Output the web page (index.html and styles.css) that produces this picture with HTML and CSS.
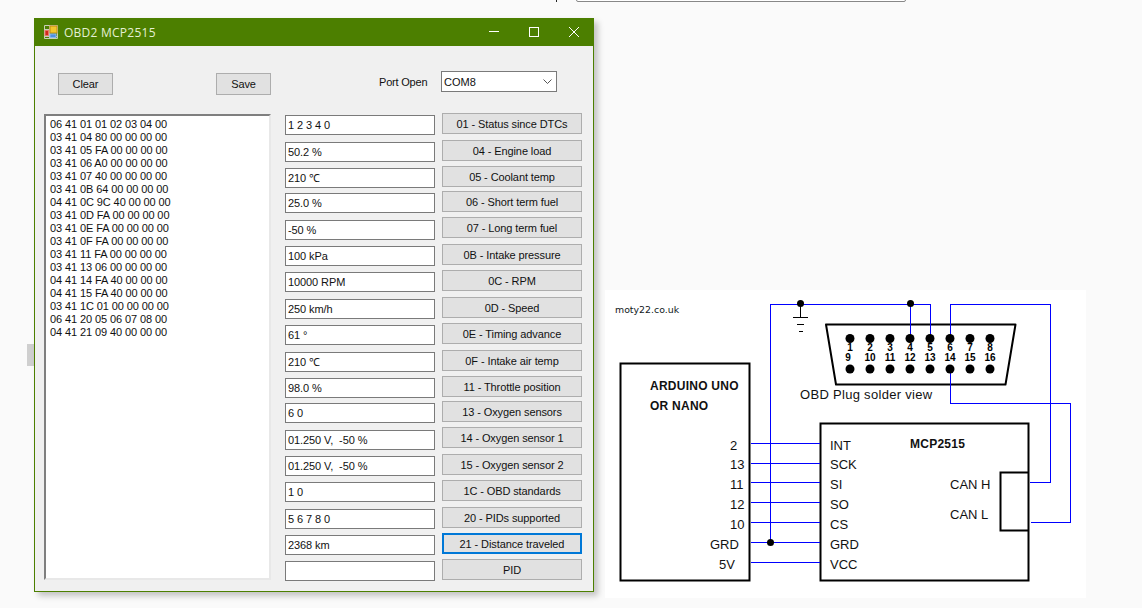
FILE: index.html
```html
<!DOCTYPE html>
<html lang="en">
<head>
  <meta charset="UTF-8">
  <title>OBD2 MCP2515</title>
  <link rel="stylesheet" href="styles.css">
</head>
<body>
  <div class="browser-select"></div>
  <div class="browser-tick"></div>
  <div class="side-handle"></div>

  <div class="desktop">
    <section class="window">
      <header class="titlebar">
        <svg class="app-icon" width="16" height="16" viewBox="0 0 16 16">
          <path d="M1.5 1.5H14.5V14.5H1.5ZM1.5 5.5H6.5M6.5 1.5V14.5M1.5 12.5H14.5" fill="none" stroke="#c9cdb8"/>
          <rect x="7" y="2" width="7" height="7" fill="#f3c72c" stroke="#c08a10"/>
          <rect x="2" y="6.5" width="3.5" height="5" fill="#d0281c" stroke="#e87868"/>
          <rect x="7" y="10" width="6" height="3.5" fill="#4f8fe0" stroke="#8ab8ec"/>
        </svg>
        <span class="title">OBD2 MCP2515</span>
        <div class="controls">
          <svg width="10" height="10" viewBox="0 0 10 10"><path d="M0 4.5H10" stroke="#fff"/></svg>
          <svg width="10" height="10" viewBox="0 0 10 10"><rect x="0.5" y="0.5" width="9" height="9" fill="none" stroke="#fff"/></svg>
          <svg width="10" height="10" viewBox="0 0 10 10"><path d="M0 0L10 10M10 0L0 10" stroke="#fff"/></svg>
        </div>
      </header>

      <div class="toolbar">
        <button class="btn tool-btn">Clear</button>
        <button class="btn tool-btn save-btn">Save</button>
        <label class="port-label">Port Open</label>
        <div class="combo">
          <span>COM8</span>
          <svg width="9" height="5" viewBox="0 0 9 5"><path d="M0.5 0.5L4.5 4.5L8.5 0.5" fill="none" stroke="#555"/></svg>
        </div>
      </div>

      <div class="content">
        <div class="log">06 41 01 01 02 03 04 00
03 41 04 80 00 00 00 00
03 41 05 FA 00 00 00 00
03 41 06 A0 00 00 00 00
03 41 07 40 00 00 00 00
03 41 0B 64 00 00 00 00
04 41 0C 9C 40 00 00 00
03 41 0D FA 00 00 00 00
03 41 0E FA 00 00 00 00
03 41 0F FA 00 00 00 00
03 41 11 FA 00 00 00 00
03 41 13 06 00 00 00 00
04 41 14 FA 40 00 00 00
04 41 15 FA 40 00 00 00
03 41 1C 01 00 00 00 00
06 41 20 05 06 07 08 00
04 41 21 09 40 00 00 00</div>

        <div class="rows">
          <div class="row"><div class="field">1 2 3 4 0</div><button class="btn pid">01 - Status since DTCs</button></div>
          <div class="row wide"><div class="field">50.2 %</div><button class="btn pid">04 - Engine load</button></div>
          <div class="row"><div class="field">210 ℃</div><button class="btn pid">05 - Coolant temp</button></div>
          <div class="row tight"><div class="field">25.0 %</div><button class="btn pid">06 - Short term fuel</button></div>
          <div class="row wide low"><div class="field">-50 %</div><button class="btn pid">07 - Long term fuel</button></div>
          <div class="row"><div class="field">100 kPa</div><button class="btn pid">0B - Intake pressure</button></div>
          <div class="row"><div class="field">10000 RPM</div><button class="btn pid">0C - RPM</button></div>
          <div class="row wide"><div class="field">250 km/h</div><button class="btn pid">0D - Speed</button></div>
          <div class="row"><div class="field">61 °</div><button class="btn pid">0E - Timing advance</button></div>
          <div class="row wide"><div class="field">210 ℃</div><button class="btn pid">0F - Intake air temp</button></div>
          <div class="row"><div class="field">98.0 %</div><button class="btn pid">11 - Throttle position</button></div>
          <div class="row tight"><div class="field">6 0</div><button class="btn pid">13 - Oxygen sensors</button></div>
          <div class="row wide low"><div class="field">01.250 V,&nbsp; -50 %</div><button class="btn pid">14 - Oxygen sensor 1</button></div>
          <div class="row"><div class="field">01.250 V,&nbsp; -50 %</div><button class="btn pid">15 - Oxygen sensor 2</button></div>
          <div class="row"><div class="field">1 0</div><button class="btn pid">1C - OBD standards</button></div>
          <div class="row wide"><div class="field">5 6 7 8 0</div><button class="btn pid">20 - PIDs supported</button></div>
          <div class="row"><div class="field">2368 km</div><button class="btn pid focused">21 - Distance traveled</button></div>
          <div class="row"><div class="field"></div><button class="btn pid">PID</button></div>
        </div>
      </div>
    </section>

    <figure class="diagram">
      <svg width="481" height="308" viewBox="605 290 481 308">
        <text class="credit" x="615" y="313">moty22.co.uk</text>

        <g class="box">
          <rect x="620.5" y="363.5" width="129" height="217"/>
          <rect x="820.5" y="423.5" width="208" height="157"/>
          <path d="M1029 472.5H1000.5V530.5H1029"/>
          <path d="M826 324.5H1015.5L1005.5 384.5H836Z" stroke-linejoin="round"/>
          <path class="thin" d="M800.5 304V318M793 317.5H808M797 324.5H804M799 331.5H803"/>
        </g>

        <g class="wire">
          <path d="M770.5 542V304.5H930.5V338"/>
          <path d="M910.5 304V338"/>
          <path d="M950.5 338V304.5H1050.5V482.5H1030"/>
          <path d="M950.5 369V403.5H1070.5V522.5H1031"/>
          <path d="M751 443.5H820M751 463.5H820M751 482.5H820M751 502.5H820M751 522.5H820M751 542.5H820M751 562.5H820"/>
        </g>

        <g class="pin-no">
          <text x="850" y="351">1</text><text x="870" y="351">2</text><text x="890" y="351">3</text><text x="910" y="351">4</text>
          <text x="930" y="351">5</text><text x="950" y="351">6</text><text x="970" y="351">7</text><text x="990" y="351">8</text>
          <text x="848" y="361">9</text><text x="870" y="361">10</text><text x="890" y="361">11</text><text x="910" y="361">12</text>
          <text x="930" y="361">13</text><text x="950" y="361">14</text><text x="970" y="361">15</text><text x="990" y="361">16</text>
        </g>

        <g class="dots">
          <circle cx="850" cy="338.5" r="4.5"/><circle cx="870" cy="338.5" r="4.5"/><circle cx="890" cy="338.5" r="4.5"/><circle cx="910" cy="338.5" r="4.5"/>
          <circle cx="930" cy="338.5" r="4.5"/><circle cx="950" cy="338.5" r="4.5"/><circle cx="970" cy="338.5" r="4.5"/><circle cx="990" cy="338.5" r="4.5"/>
          <circle cx="850" cy="369" r="4.5"/><circle cx="870" cy="369" r="4.5"/><circle cx="890" cy="369" r="4.5"/><circle cx="910" cy="369" r="4.5"/>
          <circle cx="930" cy="369" r="4.5"/><circle cx="950" cy="369" r="4.5"/><circle cx="970" cy="369" r="4.5"/><circle cx="990" cy="369" r="4.5"/>
          <circle cx="800.5" cy="303.5" r="3.5"/><circle cx="910.5" cy="303.5" r="3.5"/><circle cx="770.5" cy="542.5" r="3.5"/>
        </g>

        <text class="heading" x="650" y="390">ARDUINO UNO</text>
        <text class="heading" x="650" y="410">OR NANO</text>
        <text class="heading" x="910" y="448">MCP2515</text>
        <text class="label spaced" x="800" y="399">OBD Plug solder view</text>

        <g class="label">
          <text x="730" y="450">2</text>
          <text x="730" y="469">13</text>
          <text x="730" y="489">11</text>
          <text x="730" y="509">12</text>
          <text x="730" y="529">10</text>
          <text x="710" y="549">GRD</text>
          <text x="719" y="569">5V</text>
          <text x="830" y="450">INT</text>
          <text x="830" y="469">SCK</text>
          <text x="830" y="489">SI</text>
          <text x="830" y="509">SO</text>
          <text x="830" y="529">CS</text>
          <text x="830" y="549">GRD</text>
          <text x="830" y="569">VCC</text>
          <text x="950" y="489">CAN H</text>
          <text x="950" y="519">CAN L</text>
        </g>
      </svg>
    </figure>
  </div>
</body>
</html>
```

FILE: styles.css
```css
* {
  box-sizing: border-box;
}

html, body {
  height: 100%;
}

body {
  margin: 0;
  background: #fafafa;
  font-family: "Liberation Sans", Arial, sans-serif;
  font-size: 11px;
  color: #111;
  overflow: hidden;
}

.browser-select {
  position: absolute;
  left: 576px;
  top: -6px;
  width: 330px;
  height: 8px;
  background: #fff;
  border: 1px solid #888;
  border-radius: 2px;
}

.browser-tick {
  position: absolute;
  left: 556px;
  top: 0;
  width: 1px;
  height: 2px;
  background: #222;
}

.side-handle {
  position: absolute;
  left: 27px;
  top: 344px;
  width: 7px;
  height: 22px;
  background: #cfcfcf;
}

.desktop {
  display: flex;
  align-items: flex-start;
  padding: 18px 0 0 34px;
}

/* form window */
.window {
  position: relative;
  width: 560px;
  height: 574px;
  flex: none;
  background: #f0f0f0;
  border: 1px solid #4c7f00;
  border-top: 0;
  box-shadow: 4px 4px 6px rgba(0,0,0,0.22);
}

.titlebar {
  display: flex;
  align-items: center;
  height: 28px;
  margin: 0 -1px;
  padding: 0 15px 0 9px;
  background: #4c7f00;
  color: #e4f0d4;
}

.app-icon {
  flex: none;
}

.title {
  margin-left: 5px;
  font-family: "Open Sans", sans-serif;
  font-size: 12px;
  letter-spacing: 0.25px;
}

.controls {
  display: flex;
  gap: 30px;
  margin-left: auto;
}

.btn {
  padding: 0;
  background: #e1e1e1;
  border: 1px solid #adadad;
  font: inherit;
  letter-spacing: -0.1px;
  color: #111;
}

.toolbar {
  display: flex;
  align-items: flex-start;
  height: 68px;
  padding: 25px 0 0 23px;
}

.tool-btn {
  width: 55px;
  height: 22px;
  margin-top: 2px;
}

.save-btn {
  margin-left: 103px;
}

.port-label {
  width: 50px;
  margin: 4px 0 0 108px;
  line-height: 14px;
  letter-spacing: -0.2px;
}

.combo {
  display: flex;
  align-items: center;
  justify-content: space-between;
  width: 116px;
  height: 21px;
  margin-left: 12px;
  padding: 0 4px 0 2px;
  background: #fff;
  border: 1px solid #7a7a7a;
}

.content {
  display: flex;
  align-items: flex-start;
  padding: 0 0 0 9px;
}

.log {
  width: 227px;
  height: 466px;
  padding: 2px 4px;
  background: #fff;
  border: 2px solid;
  border-color: #7f7f7f #e8e8e8 #e8e8e8 #7f7f7f;
  line-height: 13px;
  letter-spacing: -0.1px;
  white-space: pre;
}

.rows {
  display: flex;
  flex-direction: column;
  gap: 6px;
  margin: 1px 0 0 14px;
}

.row {
  display: flex;
  gap: 7px;
  height: 20px;
}

.row.wide {
  margin-top: 1px;
}

.row.tight {
  margin-top: -1px;
}

.field {
  width: 150px;
  height: 20px;
  padding: 0 2px;
  background: #fff;
  border: 1px solid #7a7a7a;
  line-height: 18px;
  letter-spacing: -0.1px;
}

.pid {
  width: 140px;
  height: 21px;
  margin-top: -2px;
}

.row.low .pid {
  margin-top: -3px;
}

.focused {
  border: 2px solid #0078d7;
}

/* wiring diagram */
.diagram {
  flex: none;
  width: 481px;
  height: 308px;
  margin: 272px 0 0 11px;
  background: #fff;
}

.diagram svg {
  display: block;
}

.box path, .box rect {
  fill: none;
  stroke: #000;
  stroke-width: 2;
}

.box .thin {
  stroke-width: 1;
  shape-rendering: crispEdges;
}

.wire path {
  fill: none;
  stroke: #0000ff;
  stroke-width: 1;
  shape-rendering: crispEdges;
}

.dots circle {
  fill: #000;
}

.credit {
  font-family: "DejaVu Sans", sans-serif;
  font-size: 9.4px;
  fill: #101822;
}

.heading {
  font-size: 12px;
  font-weight: bold;
  letter-spacing: 0.25px;
  fill: #111;
}

.label, .label text {
  font-size: 13px;
  fill: #111;
}

.spaced {
  letter-spacing: 0.3px;
}

.pin-no text {
  font-size: 10px;
  font-weight: bold;
  text-anchor: middle;
  fill: #000;
}
```
